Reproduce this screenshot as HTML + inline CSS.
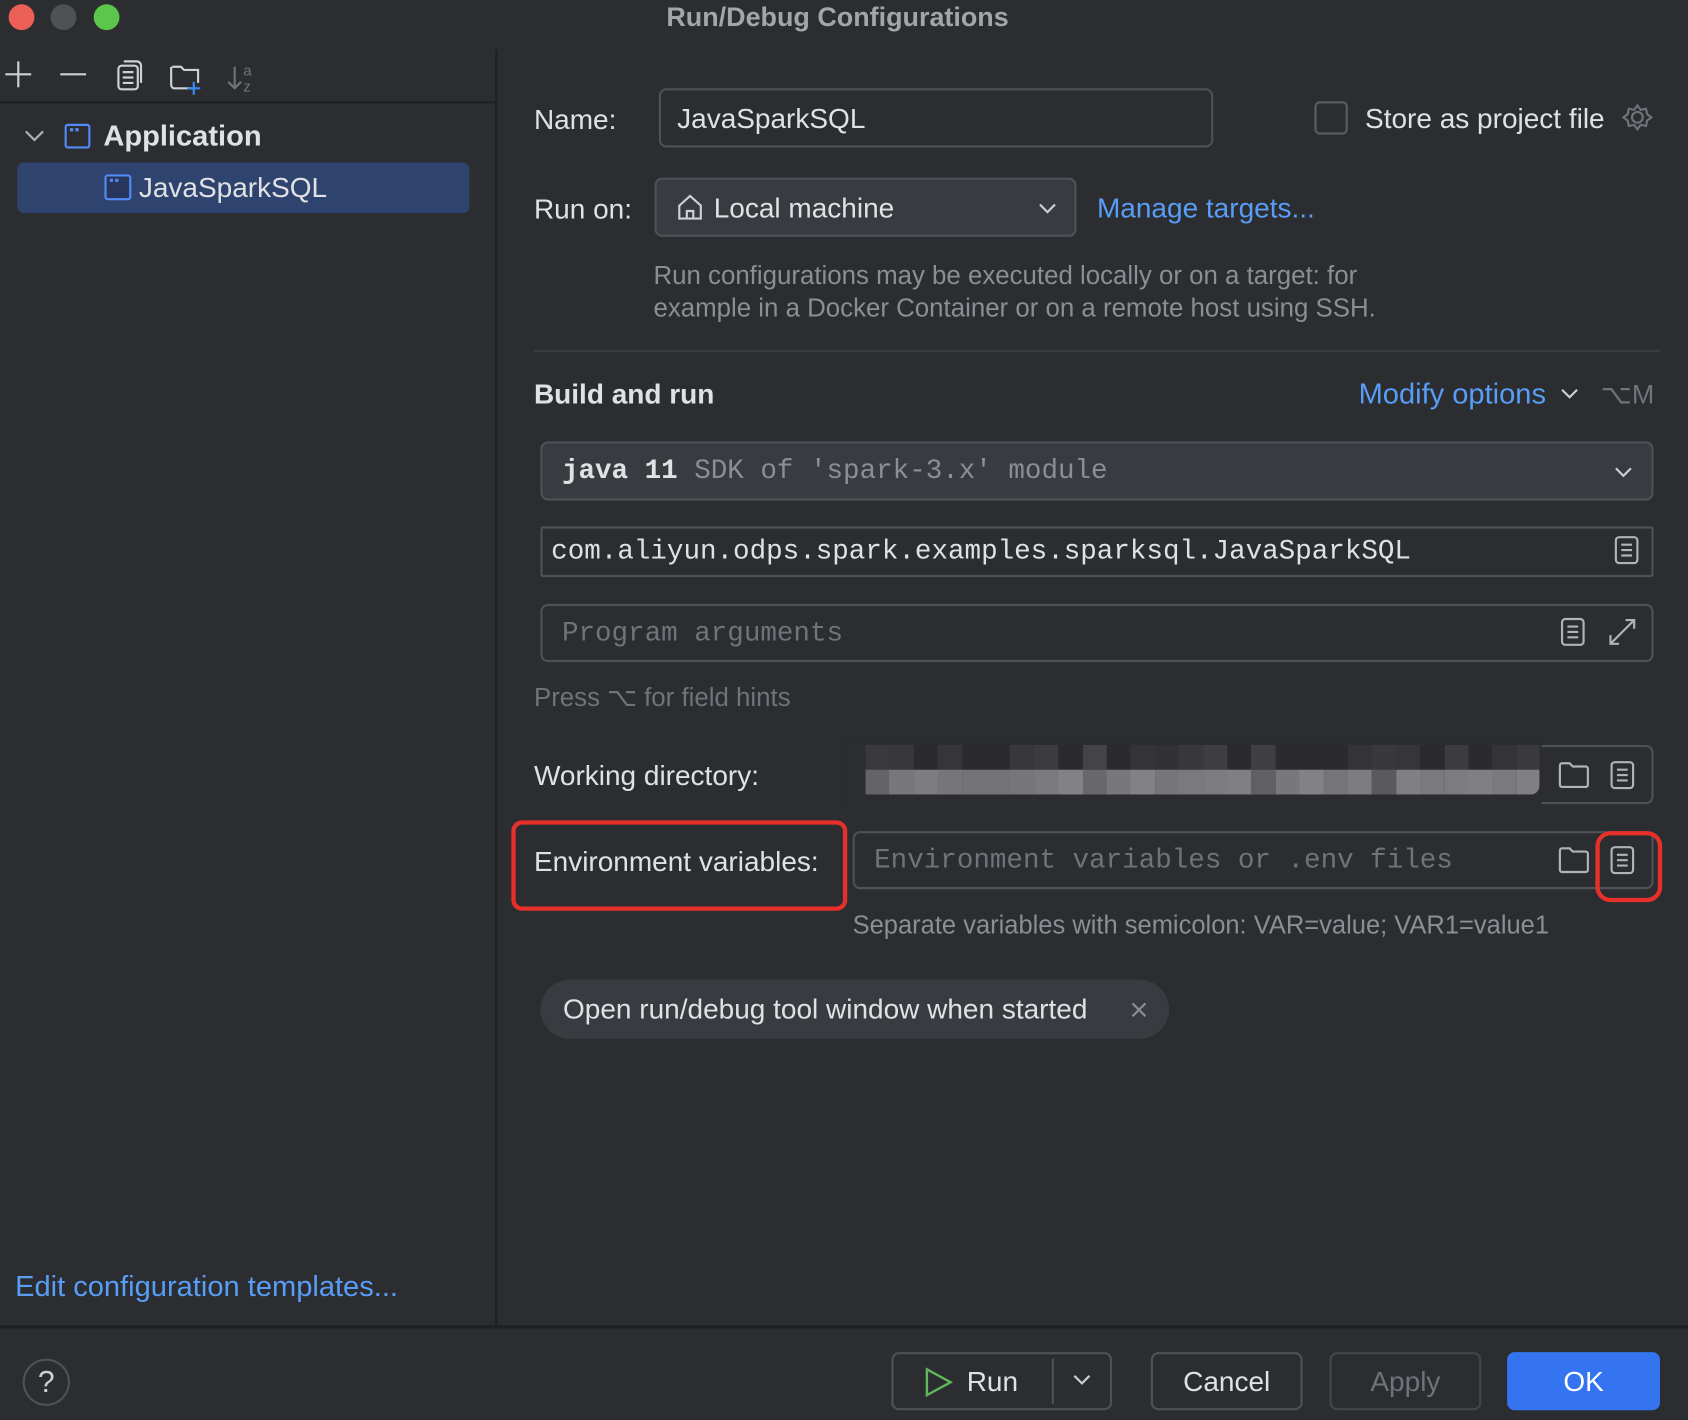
<!DOCTYPE html>
<html><head><meta charset="utf-8">
<style>
html,body{margin:0;padding:0;background:#2b2d30;overflow:hidden;width:1688px;height:1420px}
#w{position:absolute;left:0;top:0;width:1568px;height:1319px;transform:scale(1.07653);transform-origin:0 0;background:#2b2d30;font-family:"Liberation Sans",sans-serif;color:#dfe1e5;font-size:25px}
.a{position:absolute}
.mono{font-family:"Liberation Mono",monospace}
.fld{position:absolute;border:2px solid #4e5157;border-radius:7px;box-sizing:border-box}
.dd{position:absolute;border:2px solid #4e5157;border-radius:7px;background:#393b40;box-sizing:border-box}
.link{color:#589df6}
.gray{color:#8b8e94}
svg{position:absolute;overflow:visible}
.btn{position:absolute;border:2px solid #4e5157;border-radius:7px;box-sizing:border-box;height:54px;top:1256px;text-align:center;line-height:50px;font-size:26px}
</style></head><body><div id="w">
<div class="a" style="left:8px;top:4px;width:24px;height:24px;border-radius:50%;background:#ec5f57"></div>
<div class="a" style="left:47px;top:4px;width:24px;height:24px;border-radius:50%;background:#505155"></div>
<div class="a" style="left:87px;top:4px;width:24px;height:24px;border-radius:50%;background:#5bc64b"></div>
<div class="a" style="left:-6px;width:1568px;text-align:center;top:2px;font-weight:bold;font-size:25px;color:#a3a5aa">Run/Debug Configurations</div>
<div class="a" style="left:460px;top:46px;width:2px;height:1186px;background:#1f2023"></div>
<div class="a" style="left:0;top:94px;width:460px;height:2px;background:#1f2023"></div>
<svg style="left:0;top:52px" width="260" height="36" fill="none" stroke="#ced0d6" stroke-width="2">
<path d="M5 17h24M17 5v24"/><path d="M56 17h24"/>
<rect x="110" y="9" width="18" height="22" rx="3"/><path d="M115 5h12a4 4 0 0 1 4 4v16"/><path d="M114 15h10M114 20h10M114 25h10"/>
<path d="M160 10h8l3 3h13v12M178 30h-16a3 3 0 0 1-3-3V10"/><path d="M180 24v12M174 30h12" stroke="#3d8bf5"/>
<path d="M218 10v20M212 24l6 6 6-6" stroke="#6f737a"/>
<text x="226" y="18" font-size="14" fill="#6f737a" stroke="none" font-family="Liberation Sans">a</text><text x="226" y="33" font-size="14" fill="#6f737a" stroke="none" font-family="Liberation Sans">z</text>
</svg>
<svg style="left:22px;top:118px" width="20" height="16" fill="none" stroke="#b0b3b8" stroke-width="2"><path d="M2 4l8 8 8-8"/></svg>
<div class="a" style="left:60px;top:115px;width:24px;height:23px;border:2px solid #548af7;border-radius:3px;background:#2b2d30;box-sizing:border-box"></div>
<div class="a" style="left:65px;top:119px;width:3px;height:3px;background:#548af7"></div><div class="a" style="left:70px;top:119px;width:3px;height:3px;background:#548af7"></div>
<div class="a" style="left:96px;top:111px;font-weight:bold;font-size:27px;color:#dfe1e5">Application</div>
<div class="a" style="left:16px;top:151px;width:420px;height:47px;border-radius:6px;background:#2e436e"></div>
<div class="a" style="left:97px;top:162px;width:25px;height:24px;border:2px solid #548af7;border-radius:3px;background:#27365a;box-sizing:border-box"></div>
<div class="a" style="left:102px;top:166px;width:3px;height:3px;background:#548af7"></div><div class="a" style="left:107px;top:166px;width:3px;height:3px;background:#548af7"></div>
<div class="a" style="left:129px;top:159px;font-size:26px">JavaSparkSQL</div>
<div class="a link" style="left:14px;top:1180px;font-size:27px">Edit configuration templates...</div>
<div class="a" style="left:0;top:1231px;width:1568px;height:3px;background:#1f2023"></div>
<div class="a" style="left:21px;top:1262px;width:40px;height:40px;border:2px solid #4e5157;border-radius:50%;text-align:center;line-height:40px;font-size:28px;color:#ced0d6">?</div>
<div class="btn" style="left:828px;width:205px"></div>
<svg style="left:858px;top:1270px" width="30" height="28" fill="none" stroke="#5fb85a" stroke-width="2.2"><path d="M3 2l22 12L3 26z"/></svg>
<div class="a" style="left:898px;top:1268px;font-size:26px">Run</div>
<div class="a" style="left:977px;top:1262px;width:2px;height:42px;background:#4e5157"></div>
<svg style="left:996px;top:1276px" width="18" height="12" fill="none" stroke="#ced0d6" stroke-width="2"><path d="M2 2l7 7 7-7"/></svg>
<div class="btn" style="left:1069px;width:141px">Cancel</div>
<div class="btn" style="left:1235px;width:141px;color:#6f737a;border-color:#43454a">Apply</div>
<div class="btn" style="left:1400px;width:142px;background:#3574f0;border-color:#3574f0;color:#fff">OK</div>
<div class="a" style="left:496px;top:96px;font-size:26px">Name:</div>
<div class="fld" style="left:612px;top:82px;width:515px;height:55px"></div>
<div class="a" style="left:629px;top:95px;font-size:26px">JavaSparkSQL</div>
<div class="a" style="left:1221px;top:94px;width:31px;height:31px;border:2px solid #5a5d63;border-radius:5px;box-sizing:border-box"></div>
<div class="a" style="left:1268px;top:95px;font-size:26px">Store as project file</div>
<svg style="left:1508px;top:96px" width="28" height="28" fill="none" stroke="#6f737a" stroke-width="2"><circle cx="13" cy="13" r="5"/><path d="M13 2l3 4 5-1 1 5 4 3-4 3-1 5-5-1-3 4-3-4-5 1-1-5-4-3 4-3 1-5 5 1z"/></svg>
<div class="a" style="left:496px;top:179px;font-size:26px">Run on:</div>
<div class="dd" style="left:608px;top:165px;width:392px;height:55px"></div>
<svg style="left:628px;top:179px" width="26" height="26" fill="none" stroke="#ced0d6" stroke-width="2"><path d="M3 12L13 3l10 9v12H3z"/><path d="M10 24v-7h6v7"/></svg>
<div class="a" style="left:663px;top:178px;font-size:26px">Local machine</div>
<svg style="left:964px;top:188px" width="18" height="12" fill="none" stroke="#ced0d6" stroke-width="2"><path d="M2 2l7 7 7-7"/></svg>
<div class="a link" style="left:1019px;top:178px;font-size:26px">Manage targets...</div>
<div class="a gray" style="left:607px;top:242px;font-size:24px;line-height:30px">Run configurations may be executed locally or on a target: for<br>example in a Docker Container or on a remote host using SSH.</div>
<div class="a" style="left:496px;top:325px;width:1046px;height:2px;background:#393b40"></div>
<div class="a" style="left:496px;top:351px;font-weight:bold;font-size:26px">Build and run</div>
<div class="a link" style="left:1262px;top:351px;font-size:27px">Modify options</div>
<svg style="left:1449px;top:360px" width="18" height="12" fill="none" stroke="#ced0d6" stroke-width="2"><path d="M2 2l7 7 7-7"/></svg>
<div class="a" style="left:1487px;top:352px;font-size:25px;color:#6f737a">⌥M</div>
<div class="dd" style="left:502px;top:410px;width:1034px;height:55px"></div>
<div class="a mono" style="left:522px;top:423px;font-size:25.6px"><b>java 11</b> <span style="color:#8b8e94">SDK of 'spark-3.x' module</span></div>
<svg style="left:1499px;top:433px" width="18" height="12" fill="none" stroke="#ced0d6" stroke-width="2"><path d="M2 2l7 7 7-7"/></svg>
<div class="fld" style="left:502px;top:489px;width:1034px;height:47px;border-radius:2px"></div>
<div class="a mono" style="left:512px;top:498px;font-size:25.6px">com.aliyun.odps.spark.examples.sparksql.JavaSparkSQL</div>
<svg style="left:1499px;top:497px" width="24" height="28" fill="none" stroke="#b0b3b8" stroke-width="2"><rect x="2" y="2" width="20" height="24" rx="3"/><path d="M7 9h10M7 14h10M7 19h10"/></svg>
<div class="fld" style="left:502px;top:561px;width:1034px;height:54px"></div>
<div class="a mono" style="left:522px;top:574px;font-size:25.6px;color:#6f737a">Program arguments</div>
<svg style="left:1449px;top:573px" width="24" height="28" fill="none" stroke="#b0b3b8" stroke-width="2"><rect x="2" y="2" width="20" height="24" rx="3"/><path d="M7 9h10M7 14h10M7 19h10"/></svg>
<svg style="left:1492px;top:572px" width="30" height="30" fill="none" stroke="#b0b3b8" stroke-width="2"><path d="M4 26L26 4M18 4h8v8M4 18v8h8"/></svg>
<div class="a" style="left:496px;top:634px;font-size:24px;color:#6f737a">Press ⌥ for field hints</div>
<div class="a" style="left:496px;top:705px;font-size:26px">Working directory:</div>
<div class="fld" style="left:792px;top:692px;width:744px;height:55px"></div>
<div class="a" style="left:786px;top:688px;width:646px;height:60px;background:#2b2d30"></div>
<div class="a" id="pix" style="left:804px;top:692px;width:626px;height:46px;border-radius:0 0 8px 0;overflow:hidden"></div>
<svg style="left:1447px;top:707px" width="30" height="26" fill="none" stroke="#b0b3b8" stroke-width="2"><path d="M2 4a2 2 0 0 1 2-2h7l3 3h12a2 2 0 0 1 2 2v15a2 2 0 0 1-2 2H4a2 2 0 0 1-2-2z"/></svg>
<svg style="left:1495px;top:706px" width="24" height="28" fill="none" stroke="#b0b3b8" stroke-width="2"><rect x="2" y="2" width="20" height="24" rx="3"/><path d="M7 9h10M7 14h10M7 19h10"/></svg>
<div class="a" style="left:475px;top:762px;width:312px;height:84px;border:4px solid #e8302b;border-radius:10px;box-sizing:border-box"></div>
<div class="a" style="left:496px;top:785px;font-size:26px">Environment variables:</div>
<div class="fld" style="left:792px;top:772px;width:744px;height:54px"></div>
<div class="a mono" style="left:812px;top:785px;font-size:25.6px;color:#6f737a">Environment variables or .env files</div>
<svg style="left:1447px;top:786px" width="30" height="26" fill="none" stroke="#b0b3b8" stroke-width="2"><path d="M2 4a2 2 0 0 1 2-2h7l3 3h12a2 2 0 0 1 2 2v15a2 2 0 0 1-2 2H4a2 2 0 0 1-2-2z"/></svg>
<svg style="left:1495px;top:785px" width="24" height="28" fill="none" stroke="#b0b3b8" stroke-width="2"><rect x="2" y="2" width="20" height="24" rx="3"/><path d="M7 9h10M7 14h10M7 19h10"/></svg>
<div class="a" style="left:1482px;top:772px;width:62px;height:66px;border:4px solid #e8302b;border-radius:14px;box-sizing:border-box"></div>
<div class="a gray" style="left:792px;top:847px;font-size:23.7px">Separate variables with semicolon: VAR=value; VAR1=value1</div>
<div class="a" style="left:502px;top:910px;width:584px;height:55px;border-radius:28px;background:#393b40"></div>
<div class="a" style="left:523px;top:922px;font-size:26px">Open run/debug tool window when started</div>
<svg style="left:1050px;top:930px" width="16" height="16" fill="none" stroke="#8b8e94" stroke-width="2"><path d="M2 2l12 12M14 2L2 14"/></svg>
</div>
<script>
var t=[58,56,43,54,43,43,56,60,43,68,43,52,50,56,62,43,64,43,43,43,52,57,54,43,60,43,52,58];
var b=[100,120,125,118,115,115,118,122,130,104,120,130,118,122,124,128,96,120,130,118,125,90,128,122,124,128,122,128];
var h='';for(var i=0;i<28;i++){var x=i*22.4;h+='<div style="position:absolute;left:'+x+'px;top:0;width:23px;height:23px;background:rgb('+t[i]+','+t[i]+','+(t[i]+3)+')"></div><div style="position:absolute;left:'+x+'px;top:23px;width:23px;height:23px;background:rgb('+b[i]+','+b[i]+','+(b[i]+3)+')"></div>';}
document.getElementById('pix').innerHTML=h;
</script>
</body></html>
